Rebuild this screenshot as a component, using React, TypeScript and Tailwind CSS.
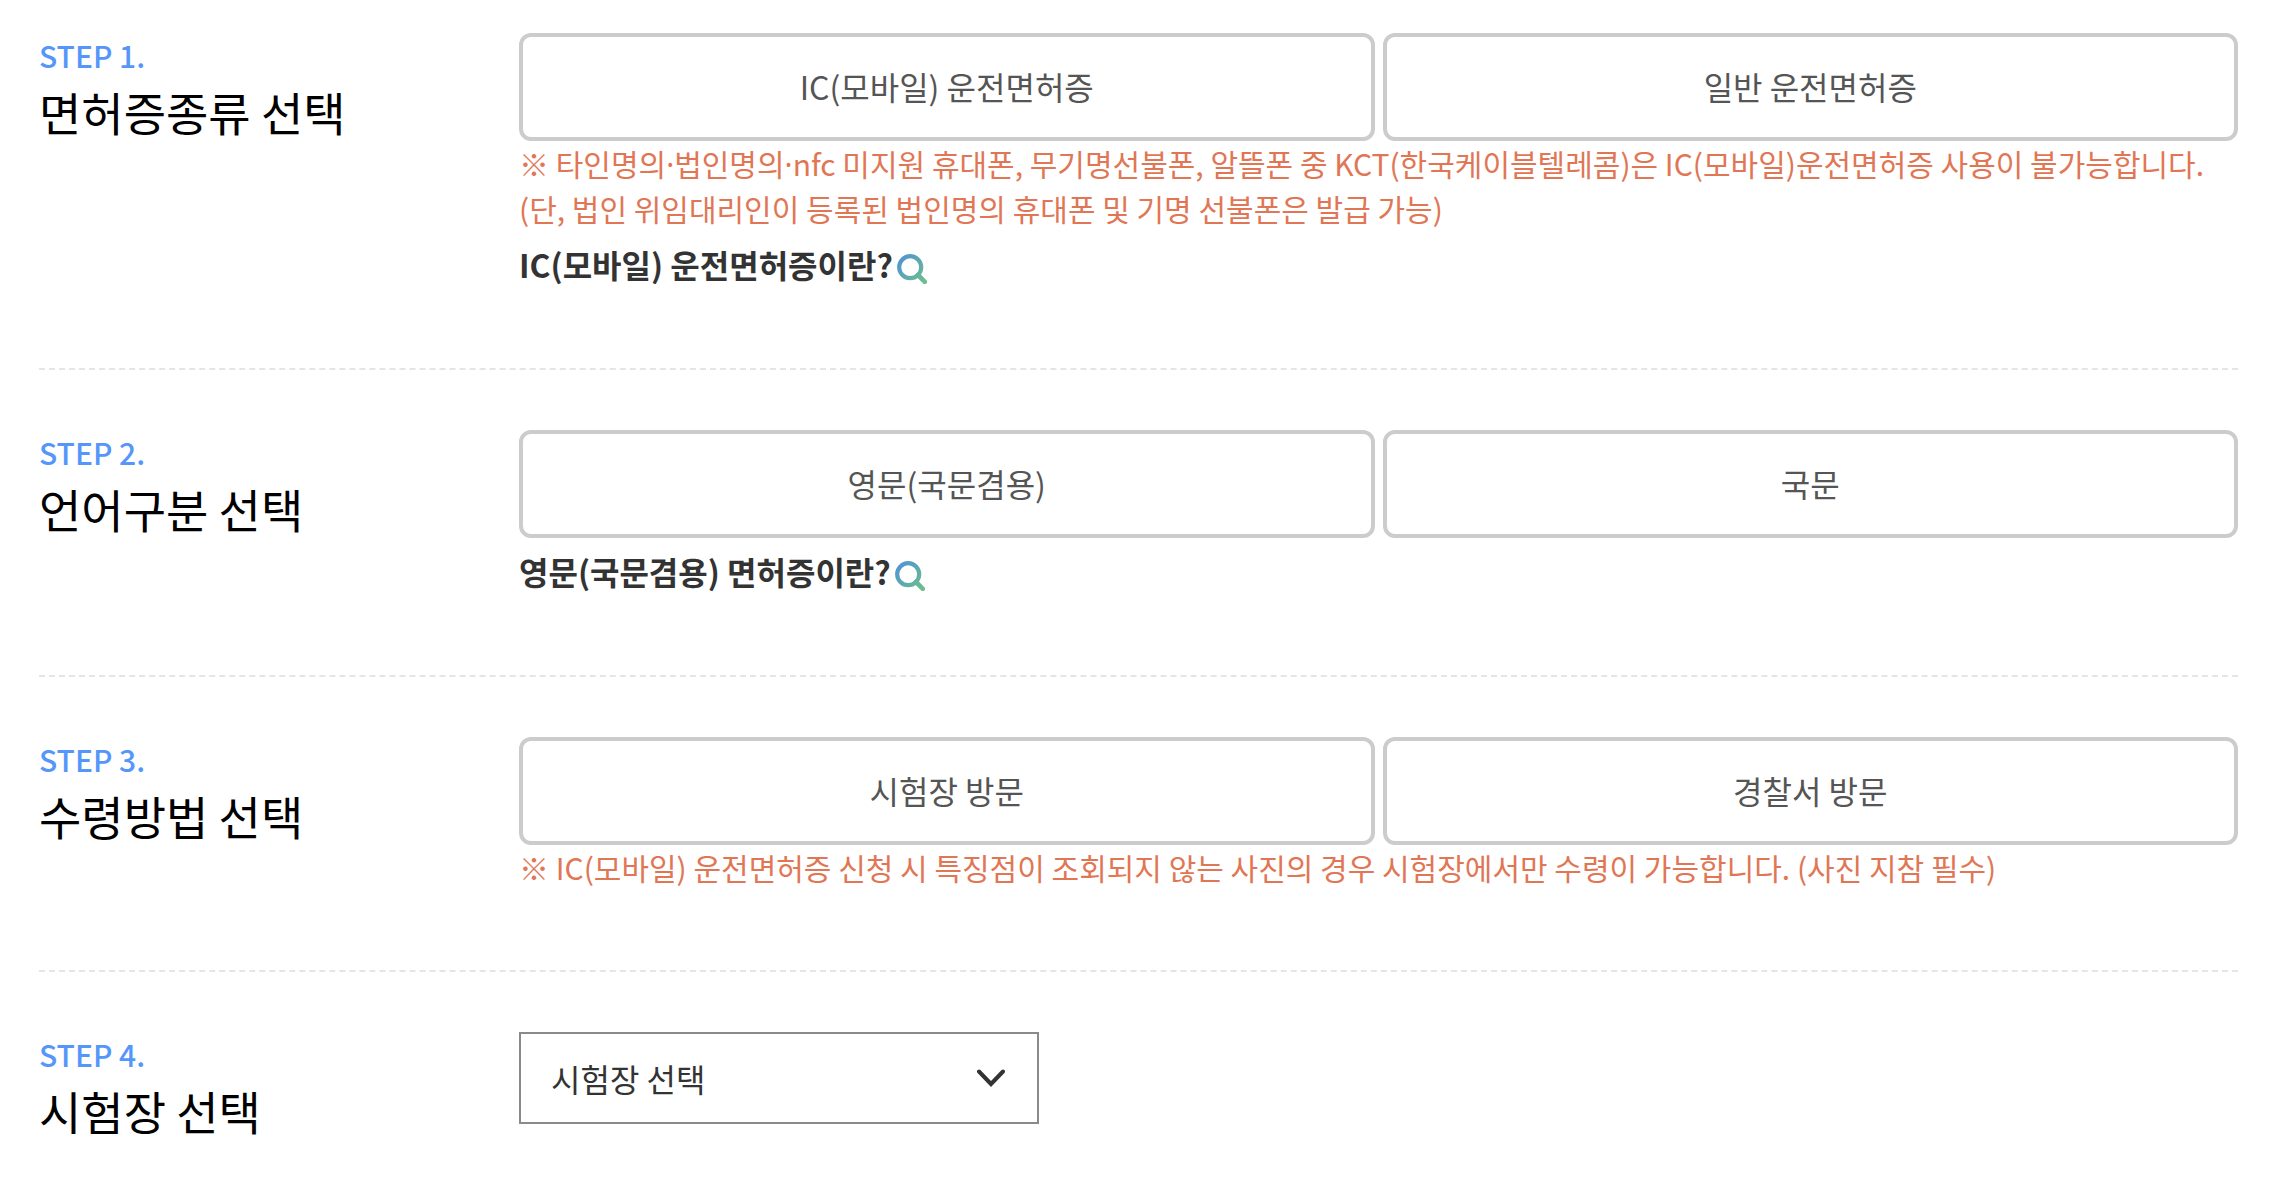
import React from 'react';

type Choice = { step: string; title: string; options: string[]; notes?: string[]; help?: string };

const choices: Choice[] = [
  {
    step: 'STEP 1.',
    title: '면허증종류 선택',
    options: ['IC(모바일) 운전면허증', '일반 운전면허증'],
    notes: [
      '※ 타인명의·법인명의·nfc 미지원 휴대폰, 무기명선불폰, 알뜰폰 중 KCT(한국케이블텔레콤)은 IC(모바일)운전면허증 사용이 불가능합니다.',
      '(단, 법인 위임대리인이 등록된 법인명의 휴대폰 및 기명 선불폰은 발급 가능)',
    ],
    help: 'IC(모바일) 운전면허증이란?',
  },
  {
    step: 'STEP 2.',
    title: '언어구분 선택',
    options: ['영문(국문겸용)', '국문'],
    help: '영문(국문겸용) 면허증이란?',
  },
  {
    step: 'STEP 3.',
    title: '수령방법 선택',
    options: ['시험장 방문', '경찰서 방문'],
    notes: ['※ IC(모바일) 운전면허증 신청 시 특징점이 조회되지 않는 사진의 경우 시험장에서만 수령이 가능합니다. (사진 지참 필수)'],
  },
];

function SearchIcon() {
  return (
    <svg className="w-[30px] h-[38px] shrink-0" viewBox="0 -8 30 38" fill="none" aria-hidden="true">
      <defs>
        <linearGradient id="lens" x1="3" y1="3" x2="28" y2="28" gradientUnits="userSpaceOnUse">
          <stop stopColor="#5095d2" />
          <stop offset="1" stopColor="#6dbf8b" />
        </linearGradient>
      </defs>
      <circle cx="13.2" cy="13.2" r="11" stroke="url(#lens)" strokeWidth="4.2" />
      <path d="M21 21L27.8 27.8" stroke="url(#lens)" strokeWidth="4.6" strokeLinecap="round" />
    </svg>
  );
}

function StepTitle({ step, title, id }: { step: string; title: string; id?: string }) {
  return (
    <div className="w-[480px] shrink-0">
      <p className="text-[30px] leading-[44px] font-medium text-[#5596fa]">{step}</p>
      <h2 id={id} className="text-[46px] leading-[68px] text-black">{title}</h2>
    </div>
  );
}

// the Korean face has a very wide middle dot, so it is set in the Latin one
function Note({ text }: { text: string }) {
  return (
    <p className="text-[30px] leading-[45px] text-[#e17655]">
      {text.split('·').map((part, i) => (
        <React.Fragment key={i}>
          {i > 0 && <span className="font-['Noto_Sans',sans-serif] leading-none">·</span>}
          {part}
        </React.Fragment>
      ))}
    </p>
  );
}

export default function App() {
  return (
    <main className="bg-white pl-[39px] pr-10 pt-[33px] font-['Noto_Sans_CJK_KR',sans-serif]">
      {choices.map((c) => (
        <section key={c.step} className="flex pb-20 mb-[60px] border-b-2 border-dashed border-[#e5e5e5]">
          <StepTitle step={c.step} title={c.title} />
          <div className="flex-1">
            <div className="flex gap-2">
              {c.options.map((o) => (
                <button key={o} type="button" className="flex-1 h-[108px] pb-0.5 rounded-xl border-4 border-[#ccc] text-[32px] text-[#555]">
                  {o}
                </button>
              ))}
            </div>
            {c.notes?.map((n) => <Note key={n} text={n} />)}
            {c.help && (
              <a href="#" className="flex items-center gap-1 mt-[11px] mb-px text-[32px] leading-[45px] font-bold text-[#333]">
                {c.help}
                <SearchIcon />
              </a>
            )}
          </div>
        </section>
      ))}

      <section className="flex pb-10">
        <StepTitle step="STEP 4." title="시험장 선택" id="site-title" />
        <div className="relative w-[520px] h-[92px]">
          <select
            aria-labelledby="site-title"
            className="w-full h-full appearance-none border-2 border-[#8a8a8a] bg-white pl-[30px] pr-20 text-[32px] text-[#333]"
          >
            <option>시험장 선택</option>
          </select>
          <svg
            className="absolute right-[34px] top-[37px] w-7 h-[18px] pointer-events-none"
            viewBox="0 0 28 18"
            fill="none"
            aria-hidden="true"
          >
            <path d="M2 2.5L14 15L26 2.5" stroke="#333" strokeWidth="4" strokeLinecap="round" />
          </svg>
        </div>
      </section>
    </main>
  );
}
